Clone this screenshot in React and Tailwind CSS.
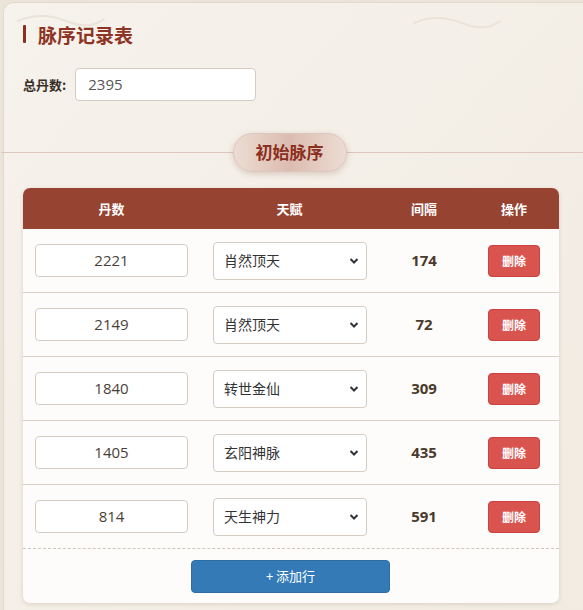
import React from "react";

const rows = [
  { n: "2221", t: "肖然顶天", g: 174 },
  { n: "2149", t: "肖然顶天", g: 72 },
  { n: "1840", t: "转世金仙", g: 309 },
  { n: "1405", t: "玄阳神脉", g: 435 },
  { n: "814", t: "天生神力", g: 591 },
];

const talents = ["肖然顶天", "转世金仙", "玄阳神脉", "天生神力"];

const font = { fontFamily: '"Open Sans", "Noto Sans CJK SC", sans-serif' };
const cjk = { fontFamily: '"Noto Sans CJK SC", sans-serif' };

function Wave({ className }) {
  return (
    <svg className={className} width="90" height="14" viewBox="0 0 90 14" fill="none">
      <path d="M2 8 C 20 0, 35 2, 50 8 S 78 14, 88 6" stroke="#ebe3d8" strokeWidth="2" strokeLinecap="round" />
    </svg>
  );
}

export default function App() {
  return (
    <div className="w-[583px] h-[610px] overflow-hidden bg-[#ebe4d9]" style={font}>
      <div className="relative ml-[3px] mt-[2px] h-[640px] rounded-tl-[10px] border-l border-t border-[#e2d9cc] bg-gradient-to-br from-[#f6f2ec] to-[#f1ebe1] pl-[19px] pr-[25px] pt-[19px]">
        <Wave className="absolute left-[12px] top-[10px]" />
        <Wave className="absolute left-[408px] top-[12px]" />
        <div className="flex items-center gap-[12px] h-[24px]">
          <div className="w-[3px] h-[18px] bg-[#8b2f1e] rounded-[1px]" />
          <div className="text-[19px] font-bold text-[#8e3424] leading-none" style={cjk}>脉序记录表</div>
        </div>
        <div className="mt-[22px] flex items-center gap-[9px]">
          <div className="text-[13px] font-bold text-[#3a2f28]" style={cjk}>总丹数:</div>
          <div className="w-[181px] h-[33px] bg-white border border-[#d4ccc2] rounded-[4px] flex items-center pl-[12px] text-[15px] text-[#555]">2395</div>
        </div>
        <div className="relative mt-[31px] h-[40px] -ml-[22px] -mr-[25px] flex items-center justify-center">
          <div className="absolute left-0 right-0 top-[20px] h-px bg-[#dcc6bd]" />
          <div className="relative -ml-[5px] w-[114px] h-[39px] rounded-full border border-[#dcc5bc] bg-gradient-to-r from-[#ecdcd3] via-[#dcbcb0] to-[#ecdcd3] shadow-[0_2px_6px_rgba(140,90,70,0.25)] flex items-center justify-center text-[17px] font-bold text-[#8b2f1e]" style={cjk}>
            初始脉序
          </div>
        </div>
        <div className="mt-[16px] w-[536px] rounded-[7px] bg-[#fdfcfa] shadow-[0_1px_4px_rgba(120,90,60,0.2)] overflow-hidden">
          <div className="h-[41px] bg-[#974331] flex items-center text-white text-[13px] font-bold" style={cjk}>
            <div className="w-[177px] text-center">丹数</div>
            <div className="w-[179px] text-center">天赋</div>
            <div className="w-[90px] text-center">间隔</div>
            <div className="w-[90px] text-center">操作</div>
          </div>
          {rows.map((r, i) => (
            <div
              key={i}
              className={
                "h-[64px] flex items-center " +
                (i === rows.length - 1 ? "border-b border-dashed border-[#cfc7bd]" : "border-b border-[#d9d1c8]")
              }
            >
              <div className="w-[177px] pl-[12px]">
                <div className="w-[153px] h-[33px] bg-white border border-[#d4ccc2] rounded-[4px] flex items-center justify-center text-[15px] text-[#4a3f38]">
                  {r.n}
                </div>
              </div>
              <div className="w-[179px] pl-[13px]">
                <div className="relative w-[154px] h-[38px]">
                  <select
                    defaultValue={r.t}
                    className="appearance-none w-full h-full bg-white border border-[#d4ccc2] rounded-[4px] pl-[10px] text-[14px] text-[#333] outline-none"
                    style={cjk}
                  >
                    {talents.map((t) => (
                      <option key={t} value={t}>{t}</option>
                    ))}
                  </select>
                  <svg className="pointer-events-none absolute right-[8px] top-[15px]" width="10" height="8" viewBox="0 0 10 8">
                    <path d="M1.5 2 L5 5.5 L8.5 2" stroke="#333" strokeWidth="2" fill="none" />
                  </svg>
                </div>
              </div>
              <div className="w-[90px] text-center text-[15px] font-bold text-[#4a3a2c]">{r.g}</div>
              <div className="w-[90px] flex justify-center">
                <div className="w-[52px] h-[32px] rounded-[4px] bg-[#d9534f] border border-[#c9443f] flex items-center justify-center text-white text-[12px] font-bold" style={cjk}>
                  删除
                </div>
              </div>
            </div>
          ))}
          <div className="h-[54px] flex items-center pl-[168px]">
            <div className="w-[199px] h-[33px] rounded-[4px] bg-[#337ab7] border border-[#2e6da4] flex items-center justify-center text-white text-[13px]" style={cjk}>
              + 添加行
            </div>
          </div>
        </div>
      </div>
    </div>
  );
}
